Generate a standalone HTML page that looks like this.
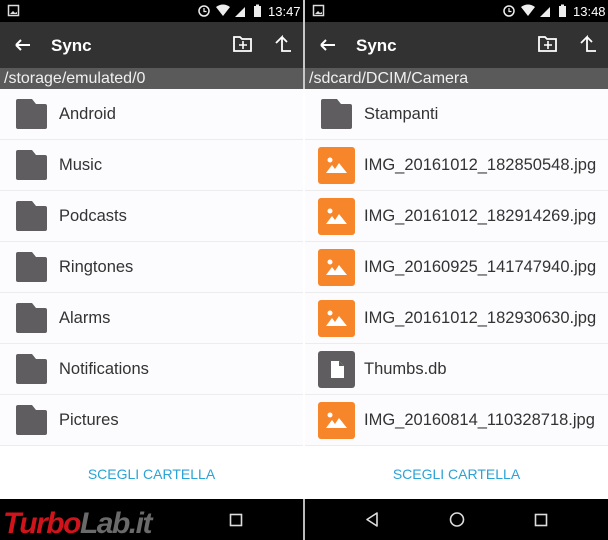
<!DOCTYPE html>
<html><head><meta charset="utf-8">
<style>
*{margin:0;padding:0;box-sizing:border-box}
body{width:608px;height:540px;position:relative;overflow:hidden;background:#fff;font-family:"Liberation Sans",sans-serif}
.a{position:absolute}
.sb{background:#000;height:22px;top:0}
.tb{background:#323232;height:46px;top:22px}
.pb{background:#5a5a5a;height:21px;top:68px;color:#f0f0f0;font-size:16px;line-height:21px;padding-left:4px;white-space:nowrap;overflow:hidden}
.row{height:51px;border-bottom:1px solid #ececec;background:#fcfbfd}
.lbl{position:absolute;font-size:16.5px;color:#333;line-height:51px;top:0;white-space:nowrap}
.btn{top:446px;height:53px;color:#2aa3d6;font-size:14px;text-align:center;line-height:56px}
.nav{background:#000;top:499px;height:41px}
.title{color:#fff;font-weight:bold;font-size:17px;top:14px}
.time{color:#fff;font-size:13px;top:4px}
</style></head><body>

<div class="a sb" style="left:0;width:303px"></div>
<div class="a tb" style="left:0;width:303px"></div>
<div class="a pb" style="left:0;width:303px">/storage/emulated/0</div>
<div class="a sb" style="left:305px;width:303px"></div>
<div class="a tb" style="left:305px;width:303px"></div>
<div class="a pb" style="left:305px;width:303px">/sdcard/DCIM/Camera</div>
<div class="a" style="left:303px;top:0;width:2px;height:89px;background:#c8c8c8"></div>
<div class="a" style="left:303px;top:499px;width:2px;height:41px;background:#bbb"></div>

<svg class="a" style="left:0;top:0" width="608" height="89" viewBox="0 0 608 89">
 <g id="st">
  <rect x="8.5" y="5.5" width="10" height="10" fill="none" stroke="#ddd" stroke-width="1.5"/>
  <path d="M10 14 L13 11 L15 13 L17 12 L17 14Z" fill="#ddd"/>
  <circle cx="204" cy="11" r="5" fill="none" stroke="#eee" stroke-width="1.5"/>
  <path d="M204 8v3.5h2.5" stroke="#eee" stroke-width="1.2" fill="none"/>
  <path d="M216 7 Q223 2 230 7 L223 16Z" fill="#eee"/>
  <path d="M235 17 L245 7 L245 17Z" fill="#eee"/>
  <rect x="254" y="6" width="7" height="11" fill="#eee"/><rect x="256" y="4.5" width="3" height="2" fill="#eee"/>
  <path d="M16 45h14M16 45l5-5M16 45l5 5" stroke="#fff" stroke-width="2" fill="none"/>
  <path d="M234 37h6l2 2h9v12h-17z" fill="none" stroke="#fff" stroke-width="1.8"/>
  <path d="M243 41v8M239 45h8" stroke="#fff" stroke-width="1.6"/>
  <path d="M276 43l6-6 0 14h9M282 37l5 5" stroke="#fff" stroke-width="1.8" fill="none"/>
 </g>
 <use href="#st" x="305" y="0"/>
</svg>
<div class="a time" style="left:268px">13:47</div>
<div class="a time" style="left:573px">13:48</div>
<div class="a title" style="left:51px;top:36px">Sync</div>
<div class="a title" style="left:356px;top:36px">Sync</div>

<svg width="0" height="0" style="position:absolute">
 <defs>
  <g id="fold"><path d="M0 2a2 2 0 0 1 2-2h14l4 5h9a2 2 0 0 1 2 2v21a2 2 0 0 1-2 2H2a2 2 0 0 1-2-2z" fill="#5f5d5f"/></g>
  <g id="img"><rect width="37" height="37" rx="3" fill="#f7862b"/><circle cx="12" cy="13" r="2.5" fill="#fff"/><path d="M8 26l6-8 3 4 4-6 8 10z" fill="#fff"/></g>
  <g id="file"><rect width="37" height="37" rx="3" fill="#5f5d5f"/><path d="M13 10h8l5 5v12h-13z" fill="#fff"/><path d="M21 10v5h5" fill="#5f5d5f"/></g>
 </defs>
</svg>

<div class="a" style="left:0;top:89px;width:303px">
 <div class="row" style="position:relative"><svg class="a" style="left:16px;top:10px" width="32" height="31"><use href="#fold"/></svg><span class="lbl" style="left:59px">Android</span></div>
 <div class="row" style="position:relative"><svg class="a" style="left:16px;top:10px" width="32" height="31"><use href="#fold"/></svg><span class="lbl" style="left:59px">Music</span></div>
 <div class="row" style="position:relative"><svg class="a" style="left:16px;top:10px" width="32" height="31"><use href="#fold"/></svg><span class="lbl" style="left:59px">Podcasts</span></div>
 <div class="row" style="position:relative"><svg class="a" style="left:16px;top:10px" width="32" height="31"><use href="#fold"/></svg><span class="lbl" style="left:59px">Ringtones</span></div>
 <div class="row" style="position:relative"><svg class="a" style="left:16px;top:10px" width="32" height="31"><use href="#fold"/></svg><span class="lbl" style="left:59px">Alarms</span></div>
 <div class="row" style="position:relative"><svg class="a" style="left:16px;top:10px" width="32" height="31"><use href="#fold"/></svg><span class="lbl" style="left:59px">Notifications</span></div>
 <div class="row" style="position:relative"><svg class="a" style="left:16px;top:10px" width="32" height="31"><use href="#fold"/></svg><span class="lbl" style="left:59px">Pictures</span></div>
</div>
<div class="a" style="left:305px;top:89px;width:303px">
 <div class="row" style="position:relative"><svg class="a" style="left:16px;top:10px" width="32" height="31"><use href="#fold"/></svg><span class="lbl" style="left:59px">Stampanti</span></div>
 <div class="row" style="position:relative"><svg class="a" style="left:13px;top:7px" width="37" height="37"><use href="#img"/></svg><span class="lbl" style="left:59px">IMG_20161012_182850548.jpg</span></div>
 <div class="row" style="position:relative"><svg class="a" style="left:13px;top:7px" width="37" height="37"><use href="#img"/></svg><span class="lbl" style="left:59px">IMG_20161012_182914269.jpg</span></div>
 <div class="row" style="position:relative"><svg class="a" style="left:13px;top:7px" width="37" height="37"><use href="#img"/></svg><span class="lbl" style="left:59px">IMG_20160925_141747940.jpg</span></div>
 <div class="row" style="position:relative"><svg class="a" style="left:13px;top:7px" width="37" height="37"><use href="#img"/></svg><span class="lbl" style="left:59px">IMG_20161012_182930630.jpg</span></div>
 <div class="row" style="position:relative"><svg class="a" style="left:13px;top:7px" width="37" height="37"><use href="#file"/></svg><span class="lbl" style="left:59px">Thumbs.db</span></div>
 <div class="row" style="position:relative"><svg class="a" style="left:13px;top:7px" width="37" height="37"><use href="#img"/></svg><span class="lbl" style="left:59px">IMG_20160814_110328718.jpg</span></div>
</div>

<div class="a btn" style="left:0;width:303px">SCEGLI CARTELLA</div>
<div class="a btn" style="left:305px;width:303px">SCEGLI CARTELLA</div>

<div class="a nav" style="left:0;width:303px"></div>
<div class="a nav" style="left:305px;width:303px"></div>
<svg class="a" style="left:0;top:499px" width="608" height="41">
 <rect x="230.5" y="15.5" width="11" height="11" fill="none" stroke="#ddd" stroke-width="1.6"/>
 <path d="M377 14v13l-10-6.5z" fill="none" stroke="#ddd" stroke-width="1.6" stroke-linejoin="round"/>
 <circle cx="457" cy="20.5" r="6.5" fill="none" stroke="#ddd" stroke-width="1.6"/>
 <rect x="535.5" y="15.5" width="11" height="11" fill="none" stroke="#ddd" stroke-width="1.6"/>
</svg>
<div class="a" style="left:3px;top:509px;font-size:30px;font-weight:bold;font-style:italic;letter-spacing:-1.5px;line-height:30px;white-space:nowrap"><span style="color:#d1141b">Turbo</span><span style="color:#6a6a6a">Lab.it</span></div>
</body></html>
